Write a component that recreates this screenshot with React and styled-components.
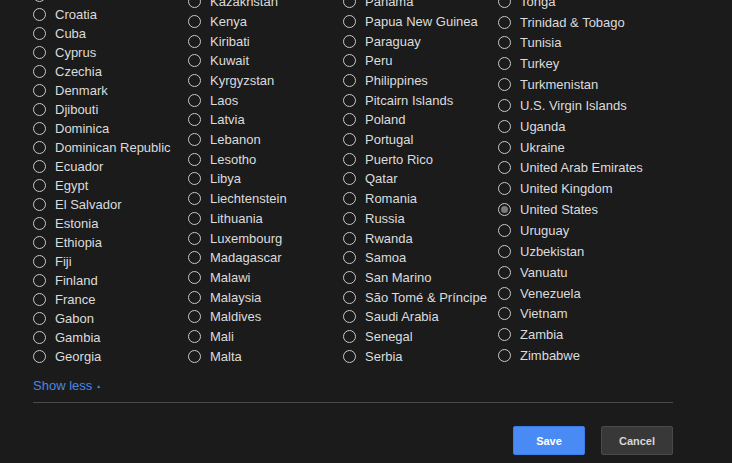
import React from "react";
import styled, { createGlobalStyle } from "styled-components";

const columns = [
    {
        pitch: 19,
        items: ["Côte d'Ivoire", "Croatia", "Cuba", "Cyprus", "Czechia", "Denmark", "Djibouti", "Dominica",
            "Dominican Republic", "Ecuador", "Egypt", "El Salvador", "Estonia", "Ethiopia", "Fiji", "Finland",
            "France", "Gabon", "Gambia", "Georgia"],
    },
    {
        pitch: 19.7,
        items: ["Kazakhstan", "Kenya", "Kiribati", "Kuwait", "Kyrgyzstan", "Laos", "Latvia", "Lebanon", "Lesotho",
            "Libya", "Liechtenstein", "Lithuania", "Luxembourg", "Madagascar", "Malawi", "Malaysia", "Maldives",
            "Mali", "Malta"],
    },
    {
        pitch: 19.7,
        items: ["Panama", "Papua New Guinea", "Paraguay", "Peru", "Philippines", "Pitcairn Islands", "Poland",
            "Portugal", "Puerto Rico", "Qatar", "Romania", "Russia", "Rwanda", "Samoa", "San Marino",
            "São Tomé & Príncipe", "Saudi Arabia", "Senegal", "Serbia"],
    },
    {
        pitch: 20.85,
        items: ["Tonga", "Trinidad & Tobago", "Tunisia", "Turkey", "Turkmenistan", "U.S. Virgin Islands", "Uganda",
            "Ukraine", "United Arab Emirates", "United Kingdom", "United States", "Uruguay", "Uzbekistan",
            "Vanuatu", "Venezuela", "Vietnam", "Zambia", "Zimbabwe"],
    },
];

function App() {
    return (
        <>
            <GlobalStyle />
            <Page>
                <ListViewport>
                    <Columns>
                        {columns.map((col, i) => (
                            <Column key={i}>
                                {col.items.map((name) => (
                                    <Option key={name} $pitch={col.pitch}>
                                        <Radio $checked={name === "United States"} />
                                        <span>{name}</span>
                                    </Option>
                                ))}
                            </Column>
                        ))}
                    </Columns>
                </ListViewport>

                <ShowLess>
                    Show less <Caret>▲</Caret>
                </ShowLess>

                <Divider />

                <Actions>
                    <SaveButton>Save</SaveButton>
                    <CancelButton>Cancel</CancelButton>
                </Actions>
            </Page>
        </>
    );
}

const GlobalStyle = createGlobalStyle`
    html, body {
        margin: 0;
        background: #1b1b1b;
        height: 100%;
    }
    body {
        font-family: "Liberation Sans", Arial, sans-serif;
        overflow: hidden;
    }
`;

const Page = styled.div`
    width: 640px;
    padding: 0 0 0 33px;
    display: flex;
    flex-direction: column;
`;

const ListViewport = styled.div`
    height: 366px;
    overflow: hidden;
    display: flex;
    align-items: flex-end;
`;

const Columns = styled.div`
    display: grid;
    grid-template-columns: repeat(4, 155px);
    align-items: end;
`;

const Column = styled.div`
    display: flex;
    flex-direction: column;
`;

const Option = styled.label`
    display: flex;
    align-items: center;
    gap: 9px;
    height: ${(p) => p.$pitch}px;
    color: #dcdcdc;
    font-size: 13px;
    white-space: nowrap;
`;

const Radio = styled.span`
    width: 11px;
    height: 11px;
    border: 1.5px solid #c8c8c8;
    border-radius: 50%;
    flex-shrink: 0;
    position: relative;

    &::after {
        content: "";
        display: ${(p) => (p.$checked ? "block" : "none")};
        position: absolute;
        inset: 2px;
        border-radius: 50%;
        background: #7a7a7a;
    }
`;

const ShowLess = styled.div`
    margin-top: 11px;
    color: #4a87e2;
    font-size: 13px;
    line-height: 15px;
    display: flex;
    align-items: center;
    gap: 4px;
`;

const Caret = styled.span`
    font-size: 5px;
    margin-top: 2px;
`;

const Divider = styled.hr`
    border: none;
    border-top: 1px solid #4a4a4a;
    margin: 8px 0 0;
`;

const Actions = styled.div`
    display: flex;
    justify-content: flex-end;
    gap: 16px;
    margin-top: 23px;
`;

const Button = styled.button`
    width: 72px;
    height: 29px;
    border-radius: 2px;
    font-family: "Liberation Sans", Arial, sans-serif;
    font-size: 11px;
    font-weight: bold;
    cursor: pointer;
`;

const SaveButton = styled(Button)`
    background: #4a8af4;
    border: 1px solid #3b7de8;
    color: #ffffff;
`;

const CancelButton = styled(Button)`
    background: #383838;
    border: 1px solid #4a4a4a;
    color: #d6d6d6;
`;

export default App;
